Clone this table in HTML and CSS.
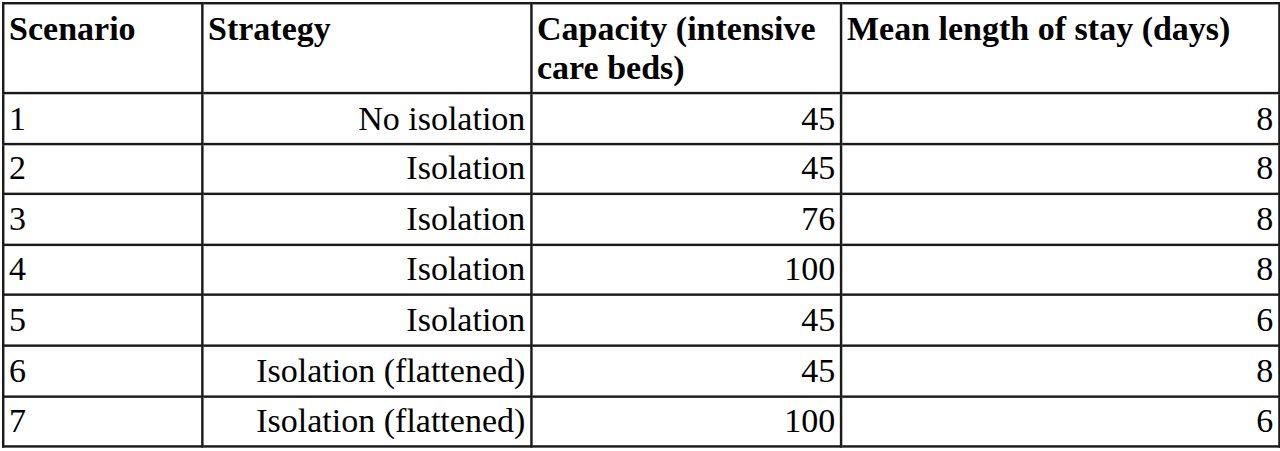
FILE: index.html
```html
<!DOCTYPE html>
<html>
<head>
<meta charset="utf-8">
<link rel="stylesheet" href="styles.css">
</head>
<body>
<table class="data">
  <colgroup>
    <col class="c1"><col class="c2"><col class="c3"><col class="c4">
  </colgroup>
  <thead>
    <tr>
      <th>Scenario</th>
      <th>Strategy</th>
      <th>Capacity (intensive care beds)</th>
      <th>Mean length of stay (days)</th>
    </tr>
  </thead>
  <tbody>
    <tr><td>1</td><td class="r">No isolation</td><td class="r">45</td><td class="r">8</td></tr>
    <tr><td>2</td><td class="r">Isolation</td><td class="r">45</td><td class="r">8</td></tr>
    <tr><td>3</td><td class="r">Isolation</td><td class="r">76</td><td class="r">8</td></tr>
    <tr><td>4</td><td class="r">Isolation</td><td class="r">100</td><td class="r">8</td></tr>
    <tr><td>5</td><td class="r">Isolation</td><td class="r">45</td><td class="r">6</td></tr>
    <tr><td>6</td><td class="r">Isolation (flattened)</td><td class="r">45</td><td class="r">8</td></tr>
    <tr><td>7</td><td class="r">Isolation (flattened)</td><td class="r">100</td><td class="r">6</td></tr>
  </tbody>
</table>
</body>
</html>
```

FILE: styles.css
```css
html {
  overflow: hidden;
}
html, body {
  margin: 0;
  background: #ffffff;
}
body {
  box-sizing: border-box;
  min-height: 451px;
  padding: 2px;
  font-family: "Liberation Serif", "Times New Roman", serif;
  font-size: 28px;
  color: #000;
}
/* regular serif face renders at 28px and is scaled up to the reference's 34px */
.data {
  border-collapse: collapse;
  width: 1050.8px;
  table-layout: fixed;
  transform: scale(1.2142857);
  transform-origin: 0 0;
}
.c1 { width: 163.9px; }
.c2 { width: 270.9px; }
.c3 { width: 255.3px; }
.c4 { width: 360.7px; }
.data th, .data td {
  border: 2px solid #1a1a1a;
  padding: 3.6px 3.8px;
  line-height: 32.4px;
  vertical-align: top;
  text-align: left;
}
.data th {
  font-weight: bold;
}
.data td.r {
  text-align: right;
}
```
